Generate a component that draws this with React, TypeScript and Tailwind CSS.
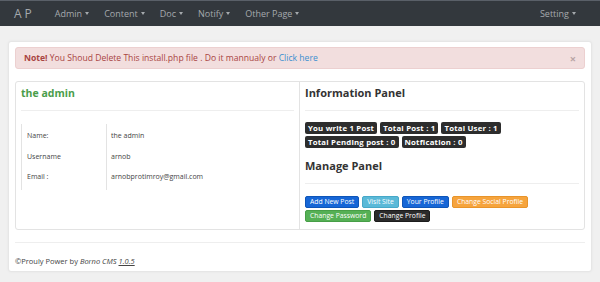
import { useState } from "react";

const navItems = ["Admin", "Content", "Doc", "Notify", "Other Page"];

const stats = [
  "You write 1 Post",
  "Total Post : 1",
  "Total User : 1",
  "Total Pending post : 0",
  "Notfication : 0",
];

const actions = [
  { label: "Add New Post", cls: "bg-[#1666d6] border-[#0e55b8]" },
  { label: "Visit Site", cls: "bg-[#5ab9d8] border-[#46a8c8]" },
  { label: "Your Profile", cls: "bg-[#1666d6] border-[#0e55b8]" },
  { label: "Change Social Profile", cls: "bg-[#f6a43d] border-[#e8942a]" },
  { label: "Change Password", cls: "bg-[#55b055] border-[#479e47]" },
  { label: "Change Profile", cls: "bg-[#2b2b2b] border-[#1c1c1c]" },
];

const Caret = () => (
  <span className="ml-[3px] inline-block border-x-[2.5px] border-t-[3px] border-x-transparent border-t-current align-middle" />
);

const App = () => {
  const [showAlert, setShowAlert] = useState(true);

  return (
    <div className="min-h-[282px] bg-[#f0f0f0] font-['Open_Sans',sans-serif] text-[#333]">
      {/* Navbar */}
      <nav className="flex h-[26px] items-center border-t border-[#5a6068] bg-[#33383d] px-[14px] text-[#a5a9ad]">
        <span className="mr-[20px] text-[12px] tracking-[3px]">AP</span>
        <ul className="flex flex-1 items-center gap-[15px] text-[9px]">
          {navItems.map((item) => (
            <li key={item} className="flex items-center">
              {item}
              <Caret />
            </li>
          ))}
        </ul>
        <span className="mr-[10px] flex items-center text-[9px]">
          Setting
          <Caret />
        </span>
      </nav>

      {/* Main card */}
      <div className="mx-[8px] mt-[15px] rounded-[3px] border border-[#e6e6e6] bg-white px-[6px] pb-[4px] pt-[5px] shadow-[0_0_3px_rgba(0,0,0,0.05)]">
        {showAlert && (
          <div className="flex h-[22px] items-center rounded-[3px] border border-[#ecd0d0] bg-[#f2dede] pl-[8px] pr-[8px] text-[8.6px] text-[#a94442]">
            <p className="flex-1">
              <b>Note!</b> You Shoud Delete This install.php file . Do it mannualy or{" "}
              <a href="#" className="text-[#3a8fd0]">
                Click here
              </a>
            </p>
            <button
              className="text-[11px] font-bold leading-none text-[#b9a5a5]"
              onClick={() => setShowAlert(false)}
            >
              ×
            </button>
          </div>
        )}

        <div className="mt-[12px] grid h-[149px] grid-cols-2 rounded-[3px] border border-[#e3e3e3]">
          {/* Left panel */}
          <div className="border-r border-[#e3e3e3] px-[5px] pt-[3px]">
            <h2 className="text-[10.5px] font-bold leading-[16px] text-[#4a9d4a]">the admin</h2>
            <hr className="mt-[9px] border-[#eeeeee]" />
            <table className="mt-[13px] border-l border-[#e3e3e3] text-[7px] text-[#444]">
              <tbody>
                <tr className="h-[22px]">
                  <td className="w-[85px] border-r border-[#e3e3e3] pl-[5px] pt-[3px]">Name:</td>
                  <td className="pl-[4px] pt-[3px]">the admin</td>
                </tr>
                <tr className="h-[22px]">
                  <td className="border-r border-[#e3e3e3] pl-[5px]">Username</td>
                  <td className="pl-[4px]">arnob</td>
                </tr>
                <tr className="h-[22px]">
                  <td className="border-r border-[#e3e3e3] pb-[3px] pl-[5px]">Email :</td>
                  <td className="pb-[3px] pl-[4px]">arnobprotimroy@gmail.com</td>
                </tr>
              </tbody>
            </table>
          </div>

          {/* Right panel */}
          <div className="px-[5px] pt-[3px]">
            <h2 className="text-[11px] font-bold leading-[16px] text-[#333]">Information Panel</h2>
            <hr className="mt-[9px] border-[#eeeeee]" />
            <div className="mt-[11px] flex w-[210px] flex-wrap gap-x-[3px] gap-y-[2px]">
              {stats.map((s) => (
                <span
                  key={s}
                  className="rounded-[2px] bg-[#2d2d2d] px-[3px] py-[1px] text-[7.8px] font-bold leading-[10px] tracking-[0.2px] text-white"
                >
                  {s}
                </span>
              ))}
            </div>
            <h2 className="mt-[10px] text-[11px] font-bold leading-[16px] text-[#333]">Manage Panel</h2>
            <hr className="mt-[9px] border-[#eeeeee]" />
            <div className="mt-[12px] flex w-[230px] flex-wrap gap-x-[3px] gap-y-[2px]">
              {actions.map((a) => (
                <button
                  key={a.label}
                  className={`rounded-[2px] border px-[4px] text-[6.8px] leading-[10px] text-white ${a.cls}`}
                >
                  {a.label}
                </button>
              ))}
            </div>
          </div>
        </div>

        {/* Footer */}
        <hr className="mt-[12px] border-[#eeeeee]" />
        <p className="mt-[13px] text-[7.5px] text-[#444]">
          ©Prouly Power by <i>Borno CMS</i> <i className="underline">1.0.5</i>
        </p>
      </div>
    </div>
  );
};

export default App;
